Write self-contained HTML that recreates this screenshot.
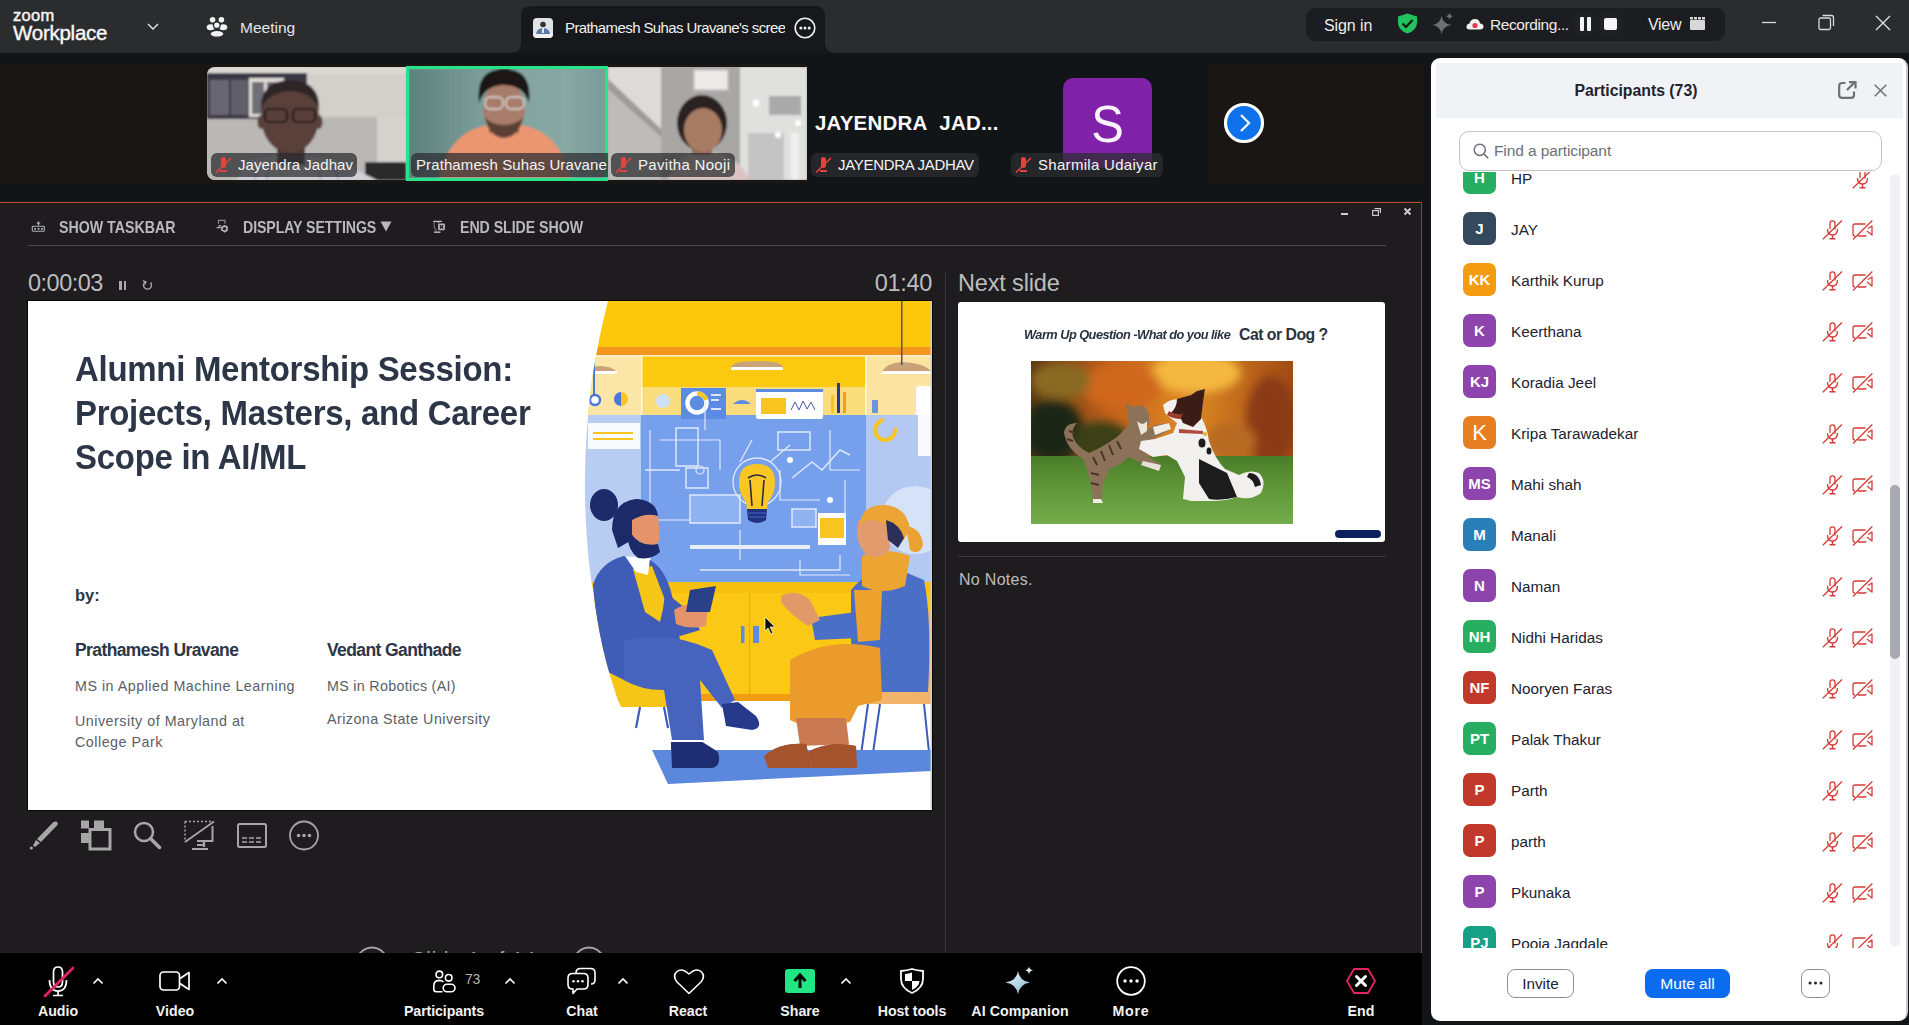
<!DOCTYPE html>
<html><head><meta charset="utf-8">
<style>
*{box-sizing:border-box;margin:0;padding:0}
html,body{width:1909px;height:1025px;overflow:hidden;background:#121518;font-family:"Liberation Sans",sans-serif;position:relative}
.a{position:absolute}
.t{position:absolute;white-space:nowrap;line-height:1}
svg{position:absolute;overflow:visible}
.lbl{position:absolute;top:153px;height:24px;border-radius:6px;background:rgba(45,45,48,0.74)}
.lt{position:absolute;top:157px;font-size:15px;color:#f4f4f4;white-space:nowrap;line-height:1;letter-spacing:0.3px}
.tb{position:absolute;top:1004px;font-size:14.2px;font-weight:700;color:#f2f2f2;white-space:nowrap;line-height:1;text-align:center;width:120px}
.pn{position:absolute;font-size:15.3px;color:#222230;white-space:nowrap;line-height:1}
.av{position:absolute;left:1463px;width:33px;height:33px;border-radius:7px;color:#fff;font-weight:700;font-size:15px;line-height:33px;text-align:center}
</style></head><body>
<!-- TOP BAR -->
<div class="a" style="left:0;top:0;width:1909px;height:53px;background:#2b2c2e"></div>
<div class="t" style="left:13px;top:7px;font-size:16.5px;font-weight:400;color:#f2f2f2;letter-spacing:0.3px;-webkit-text-stroke:0.5px #f2f2f2">zoom</div>
<div class="t" style="left:13px;top:23px;font-size:20.5px;font-weight:400;color:#f7f7f7;letter-spacing:-0.25px;-webkit-text-stroke:0.4px #f7f7f7">Workplace</div>
<svg style="left:147px;top:22px" width="12" height="9" viewBox="0 0 12 9"><path d="M1 2 L6 7 L11 2" fill="none" stroke="#e8e8e8" stroke-width="1.4"/></svg>
<svg style="left:206px;top:16px" width="22" height="22" viewBox="0 0 22 22"><circle cx="6.6" cy="3.7" r="2.8" fill="#f2f2f2"/><circle cx="15.4" cy="3.7" r="2.8" fill="#f2f2f2"/><ellipse cx="4.7" cy="11.2" rx="4" ry="3" fill="#f2f2f2"/><ellipse cx="17.3" cy="11.2" rx="4" ry="3" fill="#f2f2f2"/><circle cx="10.8" cy="9.2" r="3.3" fill="#f2f2f2" stroke="#2b2c2e" stroke-width="1.3"/><ellipse cx="11" cy="17.8" rx="7" ry="3.4" fill="#f2f2f2" stroke="#2b2c2e" stroke-width="1.2"/></svg>
<div class="t" style="left:240px;top:20px;font-size:15.5px;color:#e4e4e4">Meeting</div>
<!-- tab -->
<svg style="left:510px;top:6px" width="326" height="47" viewBox="0 0 326 47"><path d="M0 47 Q11 47 11 36 L11 10 Q11 0 21 0 L305 0 Q315 0 315 10 L315 36 Q315 47 326 47 Z" fill="#17181b"/></svg>
<svg style="left:533px;top:18px;overflow:hidden;border-radius:4px" width="20" height="20" viewBox="0 0 20 20"><rect width="20" height="20" fill="#dfe3e7"/><rect x="0" y="15" width="20" height="5" fill="#f0f0f0"/><path d="M3 16 Q4 10 10 10 Q16 10 17 16 Z" fill="#5a7aa6"/><circle cx="10" cy="6.5" r="2.8" fill="#3a3030"/><rect x="9" y="10" width="2" height="5" fill="#e8e8e8"/></svg>
<div class="t" style="left:565px;top:20px;font-size:15px;color:#f0f0f0;letter-spacing:-0.6px;width:220px;overflow:hidden">Prathamesh Suhas Uravane's screen share</div>
<svg style="left:794px;top:17px" width="22" height="22" viewBox="0 0 22 22"><circle cx="11" cy="11" r="9.8" fill="none" stroke="#f0f0f0" stroke-width="1.6"/><circle cx="6.8" cy="11" r="1.5" fill="#f0f0f0"/><circle cx="11" cy="11" r="1.5" fill="#f0f0f0"/><circle cx="15.2" cy="11" r="1.5" fill="#f0f0f0"/></svg>
<!-- right group -->
<div class="a" style="left:1306px;top:8px;width:419px;height:33px;background:#1c1d20;border-radius:9px"></div>
<div class="t" style="left:1324px;top:18px;font-size:16px;color:#ececec;letter-spacing:-0.1px">Sign in</div>
<svg style="left:1397px;top:13px" width="21" height="21" viewBox="0 0 21 21"><path d="M10.5 0.5 L20 3.5 L20 10 Q20 17 10.5 20.5 Q1 17 1 10 L1 3.5 Z" fill="#22c35e"/><path d="M5.5 10.5 L9 14 L15.5 7" fill="none" stroke="#0f1a12" stroke-width="2.2"/></svg>
<svg style="left:1432px;top:12px" width="22" height="23" viewBox="0 0 22 23"><path d="M9.5 3.5 Q10.5 12 19.5 13 Q10.5 14 9.5 22.5 Q8.5 14 0.5 13 Q8.5 12 9.5 3.5 Z" fill="#6f7075"/><path d="M17.5 1 Q18 3.6 20.8 4.2 Q18 4.8 17.5 7.6 Q17 4.8 14.2 4.2 Q17 3.6 17.5 1 Z" fill="#6f7075"/></svg>
<svg style="left:1466px;top:18px" width="18" height="12" viewBox="0 0 18 12"><path d="M3.5 11.5 Q0 11.5 0.5 8 Q1 5.5 3.5 5.5 Q4.5 1 9 1 Q13.5 1 14 5.5 Q17.5 5.8 17.5 8.5 Q17.5 11.5 14 11.5 Z" fill="#f1f1f1"/><circle cx="9" cy="7.5" r="2.6" fill="#e8384f"/></svg>
<div class="t" style="left:1490px;top:17px;font-size:15.5px;color:#ececec;letter-spacing:-0.4px">Recording...</div>
<div class="a" style="left:1573px;top:11px;width:26px;height:26px;border-radius:13px;background:#1f2023"></div>
<div class="a" style="left:1580px;top:17px;width:4px;height:14px;background:#f5f5f5;border-radius:1px"></div>
<div class="a" style="left:1587px;top:17px;width:4px;height:14px;background:#f5f5f5;border-radius:1px"></div>
<div class="a" style="left:1598px;top:11px;width:26px;height:26px;border-radius:13px;background:#1f2023"></div>
<div class="a" style="left:1604px;top:18px;width:13px;height:12px;background:#f5f5f5;border-radius:2px"></div>
<div class="t" style="left:1648px;top:17px;font-size:16px;color:#ececec;letter-spacing:-0.3px">View</div>
<svg style="left:1690px;top:17px" width="15" height="13" viewBox="0 0 15 13"><rect x="0" y="3" width="15" height="10" rx="1" fill="#d8d8d8"/><rect x="0" y="0" width="3" height="2.5" fill="#d8d8d8"/><rect x="4" y="0" width="3" height="2.5" fill="#d8d8d8"/><rect x="8" y="0" width="3" height="2.5" fill="#d8d8d8"/><rect x="12" y="0" width="3" height="2.5" fill="#d8d8d8"/></svg>
<svg style="left:1761px;top:15px" width="16" height="16" viewBox="0 0 16 16"><path d="M1 7.5 H15" stroke="#d9d9d9" stroke-width="1.3"/></svg>
<svg style="left:1818px;top:14px" width="17" height="17" viewBox="0 0 17 17"><rect x="1" y="4" width="11.5" height="11.5" rx="1.5" fill="none" stroke="#d9d9d9" stroke-width="1.3"/><path d="M4.5 1.5 H13.5 Q15.5 1.5 15.5 3.5 V12" fill="none" stroke="#d9d9d9" stroke-width="1.3"/></svg>
<svg style="left:1875px;top:15px" width="16" height="16" viewBox="0 0 16 16"><path d="M1 1 L15 15 M15 1 L1 15" stroke="#e0e0e0" stroke-width="1.4"/></svg>

<!-- STRIP -->
<div class="a" style="left:0;top:63px;width:1423px;height:120px;background:#1a1614"></div>
<div class="a" style="left:807px;top:63px;width:401px;height:120px;background:#121518"></div>

<!-- thumb 1: Jayendra -->
<div class="a" style="left:207px;top:67px;width:199px;height:113px;border-radius:8px 0 0 8px;overflow:hidden;background:#cbc8c4">
<svg style="left:0;top:0" width="199" height="113" viewBox="0 0 199 113"><defs><filter id="bl1" x="-5%" y="-5%" width="110%" height="110%"><feGaussianBlur stdDeviation="1.1"/></filter></defs>
<g filter="url(#bl1)">
<rect width="199" height="113" fill="#d3cfca"/>
<rect x="0" y="0" width="199" height="7" fill="#dcd9d4"/>
<rect x="0" y="50" width="170" height="63" fill="#bab8b5"/>
<rect x="170" y="50" width="29" height="63" fill="#d6d2cd"/>
<rect x="0" y="6" width="100" height="46" fill="#3a3744"/>
<rect x="3" y="13" width="19" height="35" fill="#67666f"/>
<rect x="24" y="13" width="17" height="35" fill="#5f5e69"/>
<rect x="42" y="11" width="35" height="39" fill="#dedbd6"/>
<rect x="45" y="15" width="12" height="32" fill="#6f6e77"/>
<rect x="60" y="15" width="14" height="32" fill="#66656f"/>
<rect x="158" y="95" width="41" height="18" fill="#2b2929"/>
<path d="M30 113 L40 94 Q82 82 130 94 L170 113 Z" fill="#cfd1d8"/><path d="M50 100 L48 113 M62 96 L60 113 M110 96 L114 113 M126 98 L132 113" stroke="#9aa0b8" stroke-width="1.5"/>
<rect x="70" y="78" width="28" height="20" fill="#4e3733"/>
<ellipse cx="83" cy="50" rx="29" ry="36" fill="#5a3f3a"/>
<path d="M54 44 Q52 14 83 13 Q114 14 112 44 Q108 26 83 24 Q58 26 54 44 Z" fill="#2e2727"/>
<ellipse cx="54" cy="55" rx="3.5" ry="7" fill="#5a3f3a"/>
<ellipse cx="112" cy="55" rx="3.5" ry="7" fill="#5a3f3a"/>
<rect x="58" y="42" width="22" height="13" rx="4" fill="none" stroke="#221a1a" stroke-width="2.2"/>
<rect x="86" y="42" width="22" height="13" rx="4" fill="none" stroke="#221a1a" stroke-width="2.2"/>
</g></svg>
</div>
<div class="lbl" style="left:211px;width:146px"></div>
<div class="lt" style="left:238px;letter-spacing:0.05px">Jayendra Jadhav</div>

<!-- thumb 2: Prathamesh -->
<div class="a" style="left:406px;top:66px;width:202px;height:115px;background:#27e38a"></div>
<div class="a" style="left:409px;top:69px;width:196px;height:109px;overflow:hidden;background:#7a9c98">
<svg style="left:0;top:0" width="196" height="109" viewBox="0 0 196 109"><defs><filter id="bl2" x="-5%" y="-5%" width="110%" height="110%"><feGaussianBlur stdDeviation="1.2"/></filter>
<linearGradient id="tg" x1="0" y1="0" x2="1" y2="0"><stop offset="0" stop-color="#5e817d"/><stop offset="0.45" stop-color="#82a39f"/><stop offset="0.8" stop-color="#88a8a4"/><stop offset="1" stop-color="#7a9b97"/></linearGradient></defs>
<g filter="url(#bl2)">
<rect width="196" height="109" fill="url(#tg)"/>
<path d="M30 109 Q40 62 80 56 L112 56 Q150 62 162 109 Z" fill="#eb9670"/>
<rect x="80" y="48" width="30" height="16" fill="#946a5a"/>
<ellipse cx="95" cy="40" rx="21" ry="28" fill="#a87c6a"/>
<path d="M76 48 Q80 68 95 69 Q110 68 114 48 Q108 56 95 56 Q82 56 76 48 Z" fill="#5a4036"/>
<path d="M70 34 Q66 0 95 0 Q124 0 120 34 Q114 16 95 16 Q76 16 70 34 Z" fill="#1b1616"/>
<rect x="76" y="28" width="18" height="12" rx="5" fill="none" stroke="#dcdcdc" stroke-width="1.4"/>
<rect x="97" y="28" width="18" height="12" rx="5" fill="none" stroke="#dcdcdc" stroke-width="1.4"/>
</g></svg>
</div>
<div class="lbl" style="left:411px;width:197px;border-radius:6px 0 0 6px"></div>
<div class="lt" style="left:416px;letter-spacing:0.1px">Prathamesh Suhas Uravane</div>

<!-- thumb 3: Pavitha -->
<div class="a" style="left:608px;top:67px;width:199px;height:113px;overflow:hidden;background:#a9a8a7">
<svg style="left:0;top:0" width="199" height="113" viewBox="0 0 199 113"><defs><filter id="bl3" x="-5%" y="-5%" width="110%" height="110%"><feGaussianBlur stdDeviation="1.1"/></filter></defs>
<g filter="url(#bl3)">
<rect width="199" height="113" fill="#a8a7a5"/>
<path d="M0 0 H53 V113 H0 Z" fill="#bdbcb9"/>
<path d="M0 0 H53 V62 L0 12 Z" fill="#dddbd7"/>
<path d="M0 12 L53 62 V70 L0 22 Z" fill="#9d9c9a"/>
<rect x="132" y="0" width="67" height="113" fill="#e0e0df"/>
<rect x="140" y="66" width="36" height="47" fill="#c4c4c4"/>
<rect x="183" y="66" width="8" height="47" fill="#f0f0f0"/>
<rect x="161" y="29" width="32" height="19" fill="#aaaaaa"/>
<circle cx="148" cy="36" r="3.5" fill="#fff"/><circle cx="190" cy="56" r="3" fill="#fff"/><circle cx="170" cy="68" r="3" fill="#fff"/>
<rect x="86" y="3" width="34" height="20" fill="#ecebea" stroke="#c4c4c4" stroke-width="1.5"/>
<path d="M60 113 Q66 88 94 84 Q130 86 142 113 Z" fill="#dcc4c2"/>
<rect x="84" y="72" width="20" height="16" fill="#956a56"/>
<ellipse cx="94" cy="56" rx="25" ry="28" fill="#2c2323"/>
<ellipse cx="95" cy="63" rx="19" ry="22" fill="#a87b64"/>
</g></svg>
</div>
<div class="lbl" style="left:611px;width:124px"></div>
<div class="lt" style="left:638px">Pavitha Nooji</div>

<!-- thumb 4: JAYENDRA -->
<div class="t" style="left:815px;top:113px;font-size:20.5px;font-weight:700;color:#fafafa;letter-spacing:0.2px">JAYENDRA&nbsp; JAD...</div>
<div class="lbl" style="left:811px;width:168px"></div>
<div class="lt" style="left:838px;font-size:15px;letter-spacing:-0.3px">JAYENDRA JADHAV</div>

<!-- thumb 5: Sharmila -->
<div class="a" style="left:1063px;top:78px;width:89px;height:90px;border-radius:10px;background:#7f21a9"></div>
<div class="t" style="left:1063px;top:98px;width:89px;text-align:center;font-size:52px;color:#fbf3fb;transform:scaleX(0.94)">S</div>
<div class="lbl" style="left:1011px;width:152px"></div>
<div class="lt" style="left:1038px">Sharmila Udaiyar</div>

<!-- mute icons on labels -->
<svg style="left:215px;top:157px" width="17" height="16" viewBox="0 0 17 16"><path d="M6 2 Q6 0 8.5 0 Q11 0 11 2 L11 9 Q11 11 8.5 11 Q6 11 6 9 Z M5 13 H12 V15 H5Z" fill="#e8413d"/><path d="M1 15.5 L16 1" stroke="#e8413d" stroke-width="1.6"/></svg>
<svg style="left:615px;top:157px" width="17" height="16" viewBox="0 0 17 16"><path d="M6 2 Q6 0 8.5 0 Q11 0 11 2 L11 9 Q11 11 8.5 11 Q6 11 6 9 Z M5 13 H12 V15 H5Z" fill="#e8413d"/><path d="M1 15.5 L16 1" stroke="#e8413d" stroke-width="1.6"/></svg>
<svg style="left:815px;top:157px" width="17" height="16" viewBox="0 0 17 16"><path d="M6 2 Q6 0 8.5 0 Q11 0 11 2 L11 9 Q11 11 8.5 11 Q6 11 6 9 Z M5 13 H12 V15 H5Z" fill="#e8413d"/><path d="M1 15.5 L16 1" stroke="#e8413d" stroke-width="1.6"/></svg>
<svg style="left:1015px;top:157px" width="17" height="16" viewBox="0 0 17 16"><path d="M6 2 Q6 0 8.5 0 Q11 0 11 2 L11 9 Q11 11 8.5 11 Q6 11 6 9 Z M5 13 H12 V15 H5Z" fill="#e8413d"/><path d="M1 15.5 L16 1" stroke="#e8413d" stroke-width="1.6"/></svg>

<!-- next arrow -->
<svg style="left:1224px;top:103px" width="40" height="40" viewBox="0 0 40 40"><circle cx="20" cy="20" r="18.5" fill="#0e72ed" stroke="#fff" stroke-width="3.2"/><path d="M17 12 L25 20 L17 28" fill="none" stroke="#fff" stroke-width="2.2"/></svg>
<!-- PRESENTER WINDOW -->
<div class="a" style="left:0;top:201px;width:1422px;height:752px;background:#1e1c1f"></div>
<div class="a" style="left:0;top:202px;width:1422px;height:1px;background:#b54c34"></div>
<div class="a" style="left:1421px;top:202px;width:1px;height:751px;background:#8c3f2e"></div>
<!-- title bar controls -->
<div class="a" style="left:1341px;top:213px;width:7px;height:2px;background:#d0d0d0"></div>
<svg style="left:1372px;top:208px" width="9" height="8" viewBox="0 0 9 8"><rect x="0.6" y="2.6" width="5.8" height="4.8" fill="none" stroke="#c8c8c8" stroke-width="1.2"/><path d="M2.5 0.6 H8.4 V5" fill="none" stroke="#c8c8c8" stroke-width="1.2"/></svg>
<svg style="left:1404px;top:208px" width="7" height="7" viewBox="0 0 7 7"><path d="M0.5 0.5 L6.5 6.5 M6.5 0.5 L0.5 6.5" stroke="#d0d0d0" stroke-width="1.8"/></svg>

<!-- toolbar -->
<svg style="left:31px;top:221px" width="15" height="11" viewBox="0 0 15 11"><path d="M7.5 0.5 V4.5 M5.8 2.2 H9.2" stroke="#b0b0b0" stroke-width="1.2"/><rect x="1.3" y="5.2" width="12" height="5" rx="0.8" fill="none" stroke="#b0b0b0" stroke-width="1.1"/><rect x="3" y="7" width="2" height="1.6" fill="#b0b0b0"/><rect x="6.5" y="7" width="2" height="1.6" fill="#b0b0b0"/><rect x="10" y="7" width="2" height="1.6" fill="#b0b0b0"/></svg>
<div class="t" style="left:59px;top:221px;font-size:14.2px;font-weight:700;color:#b9b9b9;transform:scaleY(1.1);transform-origin:0 100%;transform:scaleY(1.1);transform-origin:0 100%;transform:scaleY(1.1);transform-origin:0 100%">SHOW TASKBAR</div>
<svg style="left:216px;top:219px" width="14" height="15" viewBox="0 0 14 15"><path d="M2.5 4.8 V1.3 H9 V4.8" fill="none" stroke="#8a8a8a" stroke-width="1.2"/><path d="M2.3 6.8 H5 M0.6 8.7 H4.8" stroke="#b8b8b8" stroke-width="1.2"/><circle cx="8.5" cy="9.7" r="2.5" fill="none" stroke="#b0b0b0" stroke-width="1.7"/><path d="M8.5 6 V7.2 M8.5 12.2 V13.4 M5.3 7.9 L6.3 8.5 M10.7 10.9 L11.7 11.5 M5.3 11.5 L6.3 10.9 M10.7 8.5 L11.7 7.9" stroke="#b0b0b0" stroke-width="1.3"/></svg>
<div class="t" style="left:243px;top:221px;font-size:14.2px;font-weight:700;color:#b9b9b9;transform:scaleY(1.1);transform-origin:0 100%;transform:scaleY(1.1);transform-origin:0 100%;transform:scaleY(1.1);transform-origin:0 100%;letter-spacing:-0.1px">DISPLAY SETTINGS</div>
<svg style="left:380px;top:221px" width="12" height="11" viewBox="0 0 12 11"><path d="M0.5 0.5 H11.5 L6 10.5 Z" fill="#b9b9b9"/></svg>
<svg style="left:433px;top:220px" width="13" height="14" viewBox="0 0 13 14"><path d="M0.3 1.3 H9 M5.5 1.3 V3" stroke="#c0c0c0" stroke-width="1.2"/><path d="M1.2 2 V7.5 L3 9.5 V11" stroke="#6a6a6a" stroke-width="1.3" fill="none"/><path d="M1 12.2 H7.5" stroke="#b0b0b0" stroke-width="1.6"/><rect x="5" y="3.5" width="7" height="6.7" rx="1.2" fill="#b4b4b4"/><path d="M6.8 5.2 L10.2 8.6 M10.2 5.2 L6.8 8.6" stroke="#111" stroke-width="1.2"/></svg>
<div class="t" style="left:460px;top:221px;font-size:14.2px;font-weight:700;color:#b9b9b9;transform:scaleY(1.1);transform-origin:0 100%;transform:scaleY(1.1);transform-origin:0 100%;transform:scaleY(1.1);transform-origin:0 100%;letter-spacing:-0.05px">END SLIDE SHOW</div>
<div class="a" style="left:28px;top:245px;width:1358px;height:1px;background:#4d4a4d"></div>

<!-- timer -->
<div class="t" style="left:28px;top:272px;font-size:23.5px;color:#bdbdbd;letter-spacing:-0.5px">0:00:03</div>
<div class="a" style="left:119px;top:281px;width:2.5px;height:9px;background:#a8a8a8"></div>
<div class="a" style="left:123.5px;top:281px;width:2.5px;height:9px;background:#a8a8a8"></div>
<svg style="left:142px;top:280px" width="11" height="11" viewBox="0 0 11 11"><path d="M3 2 A4 4 0 1 0 8.5 2.5" fill="none" stroke="#a8a8a8" stroke-width="1.4"/><path d="M0.8 0.5 L4 1.8 L2.6 4.6" fill="none" stroke="#a8a8a8" stroke-width="1.3"/></svg>
<div class="t" style="left:832px;width:100px;text-align:right;top:272px;font-size:23.5px;color:#bdbdbd;letter-spacing:-0.3px">01:40</div>
<div class="a" style="left:945px;top:273px;width:1px;height:680px;background:#38363a"></div>
<div class="t" style="left:958px;top:272px;font-size:23.5px;color:#bdbdbd;letter-spacing:-0.15px">Next slide</div>

<!-- MAIN SLIDE -->
<div class="a" style="left:28px;top:301px;width:904px;height:509px;background:#fff;overflow:hidden;box-shadow:0 0 0 1px #060606">
  <div class="t" style="left:47px;top:46px;font-size:34.5px;font-weight:700;color:#2d3647;letter-spacing:-0.3px;line-height:44px;transform:scaleX(0.956);transform-origin:0 0">Alumni Mentorship Session:<br>Projects, Masters, and Career<br>Scope in AI/ML</div>
  <div class="t" style="left:47px;top:286px;font-size:16.5px;font-weight:700;color:#2d3647">by:</div>
  <div class="t" style="left:47px;top:341px;font-size:17.5px;font-weight:700;color:#2d3647;letter-spacing:-0.6px">Prathamesh Uravane</div>
  <div class="t" style="left:299px;top:341px;font-size:17.5px;font-weight:700;color:#2d3647;letter-spacing:-0.6px">Vedant Ganthade</div>
  <div class="t" style="left:47px;top:378px;font-size:14.3px;color:#5a5e66;letter-spacing:0.5px">MS in Applied Machine Learning</div>
  <div class="t" style="left:299px;top:378px;font-size:14.3px;color:#5a5e66;letter-spacing:0.3px">MS in Robotics (AI)</div>
  <div class="t" style="left:47px;top:410px;font-size:14.3px;color:#5a5e66;line-height:21px;letter-spacing:0.5px">University of Maryland at<br>College Park</div>
  <div class="t" style="left:299px;top:411px;font-size:14.3px;color:#5a5e66;letter-spacing:0.45px">Arizona State University</div>
  <svg style="left:-28px;top:-301px" width="1909" height="1025" viewBox="0 0 1909 1025">
<defs>
<clipPath id="ilc"><path d="M608 301 Q598 340 592 380 Q584 440 585 500 Q587 560 593 590 Q600 650 618 700 Q630 730 650 750 L668 786 L932 772 L932 301 Z"/></clipPath>
<linearGradient id="ceil" x1="0" y1="0" x2="0" y2="1"><stop offset="0" stop-color="#fbd030"/><stop offset="1" stop-color="#fbe07a"/></linearGradient>
</defs>
<g clip-path="url(#ilc)">
<rect x="580" y="301" width="352" height="490" fill="#fff"/>
<rect x="580" y="301" width="352" height="46" fill="#fcc80c"/>
<rect x="580" y="347" width="352" height="9" fill="#f4961c"/>
<rect x="580" y="356" width="352" height="59" fill="#fbca10"/>
<rect x="580" y="387" width="352" height="28" fill="#f9dc7c"/>
<rect x="580" y="356" width="61" height="59" fill="#fbe6a8"/>
<rect x="866" y="356" width="66" height="59" fill="#fbe4a0"/>
<rect x="580" y="355" width="352" height="1.5" fill="#fff" opacity="0.8"/>
<rect x="641" y="356" width="1.5" height="226" fill="#fff" opacity="0.8"/>
<rect x="865" y="356" width="1.5" height="226" fill="#fff" opacity="0.8"/>
<path d="M731 368 Q731 361 756 361 Q783 361 783 368 Z" fill="#c9a27a"/><rect x="731" y="367" width="52" height="3" rx="1.5" fill="#fff"/>
<path d="M882 372 Q886 363 902 362 Q925 363 932 372 Z" fill="#c9a27a"/><rect x="882" y="371" width="50" height="3" rx="1.5" fill="#fff"/>
<path d="M585 372 Q590 366 600 366 Q612 366 617 372 Z" fill="#c9a27a"/><rect x="585" y="371" width="32" height="3" fill="#fff"/>
<rect x="901" y="301" width="1.5" height="64" fill="#555"/>
<path d="M594 360 V396" stroke="#4a78d8" stroke-width="2"/><circle cx="595" cy="400" r="5" fill="#fff" stroke="#4a78d8" stroke-width="2.5"/>
<path d="M621 392 A7 7 0 0 0 621 406 Z" fill="#4a78d8"/><path d="M621 392 A7 7 0 0 1 621 406 Z" fill="#f8c520"/>
<circle cx="663" cy="401" r="7" fill="#cfe0fa"/>
<path d="M733 404 Q742 396 751 404 Z" fill="#5b8be3"/>
<rect x="872" y="400" width="6" height="13" fill="#6d94de"/>
<rect x="916" y="387" width="16" height="45" fill="#fff"/>
<!-- blue panel -->
<rect x="580" y="415" width="61" height="168" fill="#b9cdf3"/>
<rect x="641" y="415" width="225" height="168" fill="#77a0ec"/>
<rect x="866" y="415" width="66" height="168" fill="#b3c9f2"/><circle cx="915" cy="520" r="34" fill="#d6e2f8"/>
<rect x="681" y="388" width="45" height="31" fill="#5b8be3"/>
<circle cx="697" cy="403" r="9.5" fill="none" stroke="#fff" stroke-width="4.5"/><path d="M697 393.5 A9.5 9.5 0 0 1 706 400" fill="none" stroke="#f8c520" stroke-width="4.5"/><rect x="711" y="394" width="10" height="2" fill="#dfe8fb"/><rect x="711" y="399" width="8" height="2" fill="#dfe8fb"/><rect x="711" y="408" width="10" height="2" fill="#dfe8fb"/>
<rect x="756" y="389" width="67" height="30" rx="2" fill="#fff"/><rect x="756" y="389" width="67" height="3" fill="#5b8be3"/>
<rect x="761" y="398" width="25" height="16" fill="#f8c520"/><path d="M791 410 L795 402 L799 410 L803 401 L807 409 L811 402 L815 410" fill="none" stroke="#4a5a9a" stroke-width="1"/>
<rect x="837" y="383" width="3" height="30" fill="#233b8a"/><rect x="843" y="392" width="3" height="21" fill="#f49a1c"/><rect x="831" y="395" width="3" height="18" fill="#f8c520"/>
<rect x="588" y="423" width="52" height="26" fill="#fff" opacity="0.9"/>
<rect x="593" y="432" width="40" height="2" fill="#f8c520"/><rect x="593" y="438" width="40" height="2" fill="#f8c520"/>
<rect x="918" y="386" width="14" height="70" fill="#fff" opacity="0.9"/>
<path d="M884 420 A10 10 0 1 0 895 428" fill="none" stroke="#f8c520" stroke-width="4"/>
<rect x="676" y="428" width="22" height="38" fill="none" stroke="#dfe8fb" stroke-width="1.5"/>
<rect x="686" y="468" width="22" height="20" fill="none" stroke="#dfe8fb" stroke-width="1.5"/>
<rect x="778" y="432" width="32" height="18" fill="none" stroke="#dfe8fb" stroke-width="1.5"/>
<path d="M792 478 L812 462 L822 470 L840 450 L850 455" fill="none" stroke="#dfe8fb" stroke-width="1.5"/>
<rect x="690" y="495" width="50" height="28" fill="#8fb3f0" stroke="#dfe8fb" stroke-width="1.5"/>
<rect x="792" y="509" width="24" height="18" fill="#8fb3f0" stroke="#dfe8fb" stroke-width="1.5"/>
<rect x="818" y="513" width="28" height="32" fill="#fff"/><rect x="820" y="518" width="24" height="20" fill="#f8c520"/>
<rect x="690" y="545" width="120" height="4" fill="#e8eefc"/>
<path d="M645 470 H680 M740 462 L752 440 M770 462 L790 445 M700 570 H840 V555" fill="none" stroke="#dfe8fb" stroke-width="1.3"/>
<path d="M650 430 V560 M660 440 H720 M720 440 V470 M830 430 V470 H860 M650 520 H690 M740 530 V560 M780 470 V500 H820 M705 430 V400 M845 480 V520 M800 560 V575 H850" fill="none" stroke="#dfe8fb" stroke-width="1.2"/>
<circle cx="700" cy="470" r="4" fill="none" stroke="#dfe8fb" stroke-width="1.2"/><circle cx="790" cy="460" r="3" fill="#fff"/><circle cx="830" cy="500" r="3" fill="#fff"/>
<circle cx="757" cy="482" r="24" fill="none" stroke="#dfe8fb" stroke-width="1.3"/>
<path d="M739 482 Q739 464 757 464 Q775 464 775 482 Q775 494 768 502 L767 510 L747 510 L746 502 Q739 494 739 482 Z" fill="#f9c623"/>
<path d="M750 480 L752 506 M764 480 L762 506 M748 478 Q757 472 766 478" fill="none" stroke="#2a2a40" stroke-width="1.6"/>
<path d="M747 509 L767 509 L766 520 Q757 526 748 520 Z" fill="#1f3380"/>
<path d="M748 513 H766 M749 517 H765" stroke="#4a68c8" stroke-width="1"/>
<!-- cabinet -->
<rect x="580" y="582" width="352" height="11" fill="#f7c010"/>
<rect x="580" y="593" width="352" height="103" fill="#fac815"/>
<rect x="580" y="694" width="352" height="7" fill="#f29c12"/>
<rect x="749" y="593" width="1.2" height="101" fill="#e3b010"/>
<rect x="741" y="626" width="3.5" height="17" fill="#5b8be3"/><rect x="753" y="626" width="6" height="17" fill="#5b8be3"/>
<!-- man -->
<path d="M612 651 L668 660 L672 707 L618 707 Z" fill="#f5c518"/>
<path d="M640 707 L636 728 M664 707 L668 728" stroke="#3b5cb8" stroke-width="2.2"/>
<path d="M593 585 Q600 562 624 556 L650 560 Q668 570 674 605 L680 640 L660 670 L630 683 L608 672 Q596 630 593 585 Z" fill="#3f5cb6"/>
<path d="M633 569 L652 566 L665 600 L660 622 L645 612 Z" fill="#f5c518"/>
<path d="M625 556 L650 558 L648 575 L636 572 Z" fill="#fff"/>
<path d="M665 592 L690 612 L700 630 L680 636 L662 620 Z" fill="#3f5cb6"/>
<path d="M674 610 Q690 600 708 606 L706 626 Q690 630 676 624 Z" fill="#e4936a"/>
<path d="M690 590 L716 586 L710 612 L686 612 Z" fill="#2a4088"/>
<path d="M624 640 Q670 630 712 650 L735 700 L722 708 L700 680 L704 740 L672 740 L664 690 Q640 690 624 680 Z" fill="#4663bd"/>
<path d="M671 742 L702 742 L718 752 Q722 766 712 768 L672 768 Z" fill="#1f2d72"/>
<path d="M722 704 L738 702 L756 716 Q764 728 752 730 L726 726 Z" fill="#27398a"/>
<path d="M604 505 m-14 0 a14 16 0 1 0 28 0 a14 16 0 1 0 -28 0" fill="#1c2a6a"/>
<path d="M612 530 Q612 502 636 499 Q656 500 658 516 L648 518 Q634 520 632 540 L618 548 Z" fill="#1c2a6a"/>
<path d="M632 520 Q646 512 658 516 L660 540 Q654 550 640 550 L632 540 Z" fill="#e4936a"/>
<path d="M630 532 Q640 548 658 544 L660 552 Q652 560 638 558 Q628 550 628 538 Z" fill="#1c2a6a"/>
<!-- woman -->
<path d="M849 654 L928 660 L932 704 L852 704 Z" fill="#f2b46a"/>
<path d="M916 613 L932 610 L932 700 L918 700 Z" fill="#f2b46a"/>
<path d="M868 704 L860 762 M880 704 L872 760 M924 704 L930 762" stroke="#3b5cb8" stroke-width="2"/>
<path d="M851 590 Q870 566 900 570 L924 580 Q932 620 928 692 L880 692 Q852 680 851 640 Z" fill="#4a6fc6"/>
<path d="M811 618 L856 612 L860 638 L815 640 Z" fill="#4a6fc6"/>
<path d="M781 596 Q796 588 810 600 L820 620 L808 626 Q790 614 781 602 Z" fill="#e09a6a"/>
<path d="M854 590 L882 590 L880 640 L858 642 Z" fill="#eda22e"/>
<path d="M862 556 Q885 546 910 556 L905 586 Q882 596 862 586 Z" fill="#eca530"/>
<path d="M790 660 Q830 636 880 648 L882 700 L858 706 L850 722 L812 730 L790 720 Z" fill="#eb9a2c"/>
<path d="M796 718 L846 718 L849 744 L800 746 Z" fill="#c97a52"/>
<path d="M764 756 Q780 742 806 744 L812 768 L768 768 Z" fill="#a4532c"/>
<path d="M808 752 Q830 740 856 746 L857 768 L812 768 Z" fill="#a4532c"/>
<path d="M906 526 Q922 528 923 546 Q918 556 910 550 Z" fill="#eaa234"/>
<path d="M858 522 Q870 510 888 514 L890 548 Q884 560 868 556 Q860 550 857 536 Z" fill="#e19b6c"/>
<path d="M860 524 Q862 504 886 505 Q908 508 910 530 L902 542 Q894 524 874 520 Q864 520 860 524 Z" fill="#eca534"/>
<path d="M886 520 Q900 524 904 538 L898 548 L888 540 Z" fill="#2b2f5a"/>
<!-- floor -->
<path d="M652 750 L932 750 L932 771 L668 784 Z" fill="#5b87dc"/>
<path d="M671 742 L702 742 L718 752 Q722 766 712 768 L672 768 Z" fill="#1f2d72"/>
<path d="M764 756 Q780 742 806 744 L812 768 L768 768 Z" fill="#a4532c"/>
<path d="M808 752 Q830 740 856 746 L857 768 L812 768 Z" fill="#a4532c"/>
</g>
<rect x="930.5" y="301" width="1.5" height="508" fill="#d0d0d0"/>
<path d="M765 617 L765 631 L768 628 L771 634 L773 633 L770 627 L775 627 Z" fill="#111" stroke="#fff" stroke-width="0.7"/>
</svg>

</div>

<!-- NEXT SLIDE -->
<div class="a" style="left:958px;top:302px;width:427px;height:240px;background:#fff;border-radius:3px;overflow:hidden">
  <div class="t" style="left:66px;top:26px;font-size:13.2px;font-weight:700;font-style:italic;color:#2a3340;letter-spacing:-0.55px;transform:scaleX(0.97);transform-origin:0 0">Warm Up Question -What do you like</div>
  <div class="t" style="left:281px;top:25px;font-size:15.8px;font-weight:700;color:#2a3340;letter-spacing:-0.5px">Cat or Dog ?</div>
  <svg style="left:73px;top:59px;overflow:hidden" width="262" height="163" viewBox="0 0 262 163">
<defs>
<linearGradient id="cdbg" x1="0" y1="0" x2="1" y2="0"><stop offset="0" stop-color="#5a3a14"/><stop offset="0.3" stop-color="#c0601a"/><stop offset="0.6" stop-color="#e08a24"/><stop offset="1" stop-color="#a04a14"/></linearGradient>
<linearGradient id="grass" x1="0" y1="0" x2="0" y2="1"><stop offset="0" stop-color="#4a7c2a"/><stop offset="0.4" stop-color="#5d9436"/><stop offset="1" stop-color="#74ac4c"/></linearGradient>
<filter id="cdb" x="-5%" y="-5%" width="110%" height="110%"><feGaussianBlur stdDeviation="0.6"/></filter>
<filter id="cdb2" x="-20%" y="-20%" width="140%" height="140%"><feGaussianBlur stdDeviation="5"/></filter>
</defs>
<rect width="262" height="163" fill="url(#cdbg)"/>
<g filter="url(#cdb2)">
<ellipse cx="165" cy="12" rx="45" ry="20" fill="#f4b840"/>
<ellipse cx="90" cy="25" rx="40" ry="22" fill="#d0681c"/>
<ellipse cx="30" cy="20" rx="30" ry="18" fill="#8a6a20"/>
<ellipse cx="22" cy="70" rx="30" ry="32" fill="#1c2612"/>
<ellipse cx="70" cy="80" rx="30" ry="20" fill="#3a4018"/>
<ellipse cx="240" cy="60" rx="25" ry="45" fill="#8a3a12"/>
<ellipse cx="200" cy="80" rx="25" ry="18" fill="#b86a20"/>
</g>
<rect y="95" width="262" height="68" fill="url(#grass)"/>
<g filter="url(#cdb)">
<!-- cat -->
<path d="M52 98 Q36 88 33 72 Q34 62 46 62 Q40 68 42 76 Q46 86 58 92 Q72 86 86 76 L98 64 L96 48 L94 42 L102 46 L112 44 L118 52 L118 62 L114 70 L124 64 L138 62 L140 68 L122 78 L114 86 L118 96 L130 104 L128 110 L110 102 L98 96 L88 104 L78 108 L72 124 L70 140 L62 141 L60 124 L56 108 Z" fill="#8c7258"/>
<path d="M62 96 L66 104 M70 90 L74 100 M78 84 L82 94 M86 80 L90 88 M60 112 L68 114 M60 122 L68 124 M38 70 L44 72 M36 78 L42 80" stroke="#4a3626" stroke-width="2"/>
<path d="M106 60 Q112 66 116 60 L116 70 L110 74 Z" fill="#ece6de"/>
<path d="M122 66 L138 62 L140 68 L124 74 Z" fill="#f0ece6"/>
<path d="M112 100 L130 104 L128 110 L110 104 Z" fill="#e6e0d8"/>
<path d="M62 138 L70 138 L72 142 L62 142 Z" fill="#f0ece6"/>
<!-- dog -->
<path d="M132 44 Q138 38 148 38 L160 34 L166 30 L174 28 L172 42 L170 56 Q176 66 178 80 Q184 98 194 108 L208 114 Q218 108 228 112 Q236 120 230 132 Q220 140 206 136 Q196 140 180 140 L160 140 L152 138 L154 116 L146 100 L136 94 L122 96 L108 88 L110 80 L124 78 L142 72 L146 62 Q138 56 134 52 Z" fill="#f1f0ee"/>
<path d="M146 38 L160 34 L166 30 L174 28 L172 42 L170 58 L162 66 L152 62 L148 54 L140 52 Q146 46 146 38 Z" fill="#3a1e16"/>
<path d="M138 50 Q146 56 152 52 L150 58 Q142 58 136 54 Z" fill="#9a3a2a"/>
<path d="M148 68 L172 70 L172 73 L148 72 Z" fill="#b04a40"/>
<circle cx="174" cy="73" r="2" fill="#e0b030"/>
<path d="M168 98 Q180 104 196 112 L206 136 Q190 140 178 138 L168 122 Z" fill="#1e1a1a"/>
<path d="M218 112 Q228 112 230 124 L224 126 Q222 118 216 116 Z" fill="#1e1a1a"/>
<ellipse cx="171" cy="82" rx="3.5" ry="4.5" fill="#1e1a1a"/>
<ellipse cx="178" cy="90" rx="2.5" ry="3.5" fill="#1e1a1a"/>
</g>
</svg>

  <div class="a" style="left:377px;top:228px;width:46px;height:8px;border-radius:4px;background:#0c1f5e"></div>
</div>
<div class="a" style="left:958px;top:556px;width:428px;height:1px;background:#3a383b"></div>
<div class="t" style="left:959px;top:572px;font-size:16px;color:#bdbdbd;letter-spacing:0.3px">No Notes.</div>

<!-- bottom tool icons -->
<svg style="left:29px;top:820px" width="31" height="30" viewBox="0 0 31 30"><path d="M27 1.5 Q29.5 2.5 28.5 5 L12 22 L8 19 L24.5 2 Z" fill="#a6a6a6"/><path d="M7 20 L11 23 L6 27 L4 25.5 Z" fill="#a6a6a6"/><circle cx="2.3" cy="28" r="1.6" fill="#a6a6a6"/></svg>
<svg style="left:81px;top:820px" width="30" height="30" viewBox="0 0 30 30"><rect x="0" y="0.5" width="8" height="8" fill="#a6a6a6"/><rect x="13" y="0.5" width="10" height="8" fill="#a6a6a6"/><rect x="0" y="13" width="8" height="10" fill="#a6a6a6"/><rect x="9" y="9.5" width="20" height="19.5" fill="#1e1c1f" stroke="#a6a6a6" stroke-width="3"/></svg>
<svg style="left:133px;top:821px" width="29" height="29" viewBox="0 0 29 29"><circle cx="11" cy="11" r="9" fill="none" stroke="#a6a6a6" stroke-width="2.5"/><path d="M17.5 17.5 L26.5 26.5" stroke="#a6a6a6" stroke-width="3.5" stroke-linecap="round"/></svg>
<svg style="left:184px;top:820px" width="31" height="31" viewBox="0 0 31 31"><path d="M1 1.5 H29 M1 1.5 V22" fill="none" stroke="#a6a6a6" stroke-width="1.5" stroke-dasharray="2 2"/><path d="M1 22 L30 1.5" stroke="#a6a6a6" stroke-width="1.8"/><path d="M28.5 6 V21 H13" fill="none" stroke="#a6a6a6" stroke-width="2"/><path d="M15 21 H20 V27 M8 29 H24 M13 25 H19" fill="none" stroke="#a6a6a6" stroke-width="2.2"/></svg>
<svg style="left:237px;top:823px" width="30" height="25" viewBox="0 0 30 25"><rect x="1" y="1" width="28" height="23" rx="1.5" fill="none" stroke="#a6a6a6" stroke-width="2"/><path d="M5 15 H25 M5 19 H25" stroke="#a6a6a6" stroke-width="1.6" stroke-dasharray="5 2"/></svg>
<svg style="left:289px;top:820px" width="31" height="31" viewBox="0 0 31 31"><circle cx="15" cy="15.5" r="14" fill="none" stroke="#a6a6a6" stroke-width="1.8"/><circle cx="9.5" cy="15.5" r="1.8" fill="#a6a6a6"/><circle cx="15" cy="15.5" r="1.8" fill="#a6a6a6"/><circle cx="20.5" cy="15.5" r="1.8" fill="#a6a6a6"/></svg>

<!-- partial slide counter -->
<svg style="left:355px;top:945px" width="260" height="12" viewBox="0 0 260 12"><path d="M3 12 A15 15 0 0 1 31 12" fill="none" stroke="#a6a6a6" stroke-width="2"/><path d="M220 12 A15 15 0 0 1 248 12" fill="none" stroke="#a6a6a6" stroke-width="2"/></svg>
<div class="a" style="left:0;top:953px;width:1422px;height:72px;background:#000"></div>
<div class="a" style="left:412px;top:944px;width:140px;height:9px;overflow:hidden"><div class="t" style="left:0;top:5px;font-size:20px;color:#a6a6a6;letter-spacing:1px">Slide 1 of 14</div></div>
<!-- BOTTOM TOOLBAR -->
<svg style="left:42px;top:966px" width="32" height="31" viewBox="0 0 32 31"><path d="M11.5 16 V6 Q11.5 1 16 1 Q20.5 1 20.5 6 V16 Q20.5 21 16 21 Q11.5 21 11.5 16 Z" fill="none" stroke="#fff" stroke-width="1.7"/><path d="M7.5 14 Q7.5 25 16 25 Q24.5 25 24.5 14" fill="none" stroke="#fff" stroke-width="1.7"/><path d="M16 25 V29.5 M11 29.5 H21" stroke="#fff" stroke-width="1.7"/><path d="M3 30 L31 2" stroke="#e1245f" stroke-width="2.8" stroke-linecap="round"/></svg>
<svg style="left:92px;top:977px" width="12" height="8" viewBox="0 0 12 8"><path d="M1.5 6.5 L6 2 L10.5 6.5" fill="none" stroke="#fff" stroke-width="1.6"/></svg>
<svg style="left:159px;top:971px" width="32" height="20" viewBox="0 0 32 20"><rect x="1" y="1" width="19.5" height="18" rx="3.5" fill="none" stroke="#fff" stroke-width="1.7"/><path d="M21 7.5 L30 1.5 V18.5 L21 12.5" fill="none" stroke="#fff" stroke-width="1.7" stroke-linejoin="round"/></svg>
<svg style="left:216px;top:977px" width="12" height="8" viewBox="0 0 12 8"><path d="M1.5 6.5 L6 2 L10.5 6.5" fill="none" stroke="#fff" stroke-width="1.6"/></svg>
<div class="tb" style="left:-2px">Audio</div>
<div class="tb" style="left:115px">Video</div>

<svg style="left:432px;top:969px" width="25" height="25" viewBox="0 0 25 25"><circle cx="7.3" cy="5.4" r="3.3" fill="none" stroke="#fff" stroke-width="1.6"/><circle cx="16.7" cy="8.8" r="3.3" fill="none" stroke="#fff" stroke-width="1.6"/><path d="M11.5 12.8 Q9.5 11.4 7 11.4 Q1.8 11.6 1.8 17 V20.3 Q1.8 22.8 4.3 22.8 H10.5" fill="none" stroke="#fff" stroke-width="1.6"/><rect x="11.2" y="15.3" width="11.8" height="7.5" rx="3.75" fill="none" stroke="#fff" stroke-width="1.6"/></svg>
<div class="t" style="left:465px;top:972px;font-size:14px;color:#b5b5b5;letter-spacing:-0.3px">73</div>
<svg style="left:504px;top:977px" width="12" height="8" viewBox="0 0 12 8"><path d="M1.5 6.5 L6 2 L10.5 6.5" fill="none" stroke="#fff" stroke-width="1.6"/></svg>
<div class="tb" style="left:384px;letter-spacing:-0.1px">Participants</div>
<svg style="left:567px;top:967px" width="29" height="28" viewBox="0 0 29 28"><path d="M9 6 Q9 1.5 13.5 1.5 L23.5 1.5 Q28 1.5 28 6 V13 Q28 17 24 17" fill="none" stroke="#fff" stroke-width="1.6"/><path d="M1 11 Q1 6.5 5.5 6.5 H16.5 Q21 6.5 21 11 V17.5 Q21 22 16.5 22 H10 L6 26.5 V22 H5.5 Q1 22 1 17.5 Z" fill="none" stroke="#fff" stroke-width="1.6" stroke-linejoin="round"/><circle cx="6.5" cy="14.3" r="1.2" fill="#fff"/><circle cx="11" cy="14.3" r="1.2" fill="#fff"/><circle cx="15.5" cy="14.3" r="1.2" fill="#fff"/></svg>
<svg style="left:617px;top:977px" width="12" height="8" viewBox="0 0 12 8"><path d="M1.5 6.5 L6 2 L10.5 6.5" fill="none" stroke="#fff" stroke-width="1.6"/></svg>
<div class="tb" style="left:522px">Chat</div>
<svg style="left:673px;top:968px" width="32" height="27" viewBox="0 0 32 27"><path d="M16 25.5 L4 14 Q-1 8 4 3.5 Q9 -0.5 16 6 Q23 -0.5 28 3.5 Q33 8 28 14 Z" fill="none" stroke="#fff" stroke-width="1.6" stroke-linejoin="round"/></svg>
<div class="tb" style="left:628px">React</div>

<svg style="left:785px;top:969px" width="30" height="24" viewBox="0 0 30 24"><rect x="0" y="0" width="30" height="24" rx="3" fill="#22e684"/><path d="M15 19 V7 M9.5 12 L15 6 L20.5 12" fill="none" stroke="#000" stroke-width="3"/></svg>
<svg style="left:840px;top:977px" width="12" height="8" viewBox="0 0 12 8"><path d="M1.5 6.5 L6 2 L10.5 6.5" fill="none" stroke="#fff" stroke-width="1.6"/></svg>
<div class="tb" style="left:740px">Share</div>
<svg style="left:900px;top:968px" width="24" height="26" viewBox="0 0 24 26"><path d="M12 1 Q17 2.5 23 3 V11 Q23 20 12 25 Q1 20 1 11 V3 Q7 2.5 12 1 Z" fill="none" stroke="#fff" stroke-width="1.8"/><path d="M5 6 Q9 5.5 12 4.5 V13 H5 Z M12 13 H19.5 Q19 19 12 22 Z" fill="#fff"/></svg>
<div class="tb" style="left:852px;letter-spacing:-0.1px">Host tools</div>
<svg style="left:1005px;top:966px" width="30" height="29" viewBox="0 0 30 29"><defs><linearGradient id="aig" x1="0" y1="0" x2="1" y2="1"><stop offset="0" stop-color="#e9f4fb"/><stop offset="1" stop-color="#8ab7cf"/></linearGradient></defs><path d="M13 5 Q14.5 15 25 16.5 Q14.5 18 13 28.5 Q11.5 18 0.5 16.5 Q11.5 15 13 5 Z" fill="url(#aig)"/><path d="M24 0.5 Q24.6 3.6 28 4.3 Q24.6 5 24 8.2 Q23.4 5 20 4.3 Q23.4 3.6 24 0.5 Z" fill="#d8eaf4"/></svg>
<div class="tb" style="left:960px;letter-spacing:0.1px">AI Companion</div>
<svg style="left:1116px;top:966px" width="30" height="30" viewBox="0 0 30 30"><circle cx="15" cy="15" r="13.8" fill="none" stroke="#fff" stroke-width="1.8"/><circle cx="9" cy="15" r="1.7" fill="#fff"/><circle cx="15" cy="15" r="1.7" fill="#fff"/><circle cx="21" cy="15" r="1.7" fill="#fff"/></svg>
<div class="tb" style="left:1071px;letter-spacing:0.8px">More</div>
<svg style="left:1346px;top:968px" width="30" height="26" viewBox="0 0 30 26"><path d="M8 1 H22 L29 13 L22 25 H8 L1 13 Z" fill="none" stroke="#e1245f" stroke-width="1.9" stroke-linejoin="round"/><path d="M10.5 8.5 L19.5 17.5 M19.5 8.5 L10.5 17.5" stroke="#fff" stroke-width="3" stroke-linecap="round"/></svg>
<div class="tb" style="left:1301px">End</div>
<!-- PARTICIPANTS PANEL -->
<div class="a" style="left:1431px;top:58px;width:477px;height:963px;background:#fff;border-radius:9px;border-right:2px solid #c9c9cf"></div>
<div class="a" style="left:1436px;top:63px;width:467px;height:55px;background:#f0f2f5"></div>
<div class="t" style="left:1436px;top:83px;width:400px;text-align:center;font-size:15.8px;font-weight:700;color:#1f2230">Participants (73)</div>
<svg style="left:1838px;top:81px" width="19" height="18" viewBox="0 0 19 18"><path d="M7.5 2 H4 Q1.2 2 1.2 4.8 V14 Q1.2 16.8 4 16.8 H13.2 Q16 16.8 16 14 V10.5" fill="none" stroke="#6e7078" stroke-width="2.2"/><path d="M9 9 L17 1 M11 1.2 H17.5 V7.5" fill="none" stroke="#6e7078" stroke-width="2.2"/></svg>
<svg style="left:1874px;top:84px" width="13" height="13" viewBox="0 0 13 13"><path d="M0.7 0.7 L12.3 12.3 M12.3 0.7 L0.7 12.3" stroke="#6e7078" stroke-width="1.5"/></svg>
<div class="a" style="left:1459px;top:131px;width:423px;height:40px;border:1.5px solid #c3c4cb;border-radius:10px;background:#fff"></div>
<svg style="left:1473px;top:143px" width="16" height="16" viewBox="0 0 16 16"><circle cx="6.8" cy="6.8" r="5.6" fill="none" stroke="#6b6f7a" stroke-width="1.5"/><path d="M11 11 L15.2 15.2" stroke="#6b6f7a" stroke-width="1.6"/></svg>
<div class="t" style="left:1494px;top:143px;font-size:15.5px;color:#6b6f7a;letter-spacing:-0.1px">Find a participant</div>
<div class="a" style="left:1436px;top:172px;width:467px;height:776px;overflow:hidden">
<div class="av" style="left:27px;top:-11px;background:#27ae60;">H</div>
<div class="pn" style="left:75px;top:-1px">HP</div>
<svg style="left:416px;top:-3px" width="21" height="20" viewBox="0 0 21 20"><path d="M8 9 V3.5 Q8 0.8 10.5 0.8 Q13 0.8 13 3.5 V9.5" fill="none" stroke="#d63b35" stroke-width="1.3"/><path d="M5.5 9 Q5.5 15 10.5 15 Q15.5 15 15.5 9" fill="none" stroke="#d63b35" stroke-width="1.3"/><path d="M10.5 15 V18.5 M7.5 18.7 H13.5" stroke="#d63b35" stroke-width="1.4"/><path d="M0.8 19.2 L20 0.5" stroke="#d63b35" stroke-width="1.3"/></svg>
<div class="av" style="left:27px;top:40px;background:#34495e;">J</div>
<div class="pn" style="left:75px;top:50px">JAY</div>
<svg style="left:386px;top:48px" width="21" height="20" viewBox="0 0 21 20"><path d="M8 9 V3.5 Q8 0.8 10.5 0.8 Q13 0.8 13 3.5 V9.5" fill="none" stroke="#d63b35" stroke-width="1.3"/><path d="M5.5 9 Q5.5 15 10.5 15 Q15.5 15 15.5 9" fill="none" stroke="#d63b35" stroke-width="1.3"/><path d="M10.5 15 V18.5 M7.5 18.7 H13.5" stroke="#d63b35" stroke-width="1.4"/><path d="M0.8 19.2 L20 0.5" stroke="#d63b35" stroke-width="1.3"/></svg>
<svg style="left:416px;top:48px" width="21" height="20" viewBox="0 0 21 20"><path d="M13.5 4 H3 Q1 4 1 6 V14 Q1 16 3 16" fill="none" stroke="#d63b35" stroke-width="1.3"/><path d="M6 16 H13 Q14 16 14 15" fill="none" stroke="#d63b35" stroke-width="1.3"/><path d="M15 11 L20 15 V6 L16 8.5" fill="none" stroke="#d63b35" stroke-width="1.3" stroke-linejoin="round"/><path d="M1 19.5 L20.3 0.5" stroke="#d63b35" stroke-width="1.3"/></svg>
<div class="av" style="left:27px;top:91px;background:#f39c12;">KK</div>
<div class="pn" style="left:75px;top:101px">Karthik Kurup</div>
<svg style="left:386px;top:99px" width="21" height="20" viewBox="0 0 21 20"><path d="M8 9 V3.5 Q8 0.8 10.5 0.8 Q13 0.8 13 3.5 V9.5" fill="none" stroke="#d63b35" stroke-width="1.3"/><path d="M5.5 9 Q5.5 15 10.5 15 Q15.5 15 15.5 9" fill="none" stroke="#d63b35" stroke-width="1.3"/><path d="M10.5 15 V18.5 M7.5 18.7 H13.5" stroke="#d63b35" stroke-width="1.4"/><path d="M0.8 19.2 L20 0.5" stroke="#d63b35" stroke-width="1.3"/></svg>
<svg style="left:416px;top:99px" width="21" height="20" viewBox="0 0 21 20"><path d="M13.5 4 H3 Q1 4 1 6 V14 Q1 16 3 16" fill="none" stroke="#d63b35" stroke-width="1.3"/><path d="M6 16 H13 Q14 16 14 15" fill="none" stroke="#d63b35" stroke-width="1.3"/><path d="M15 11 L20 15 V6 L16 8.5" fill="none" stroke="#d63b35" stroke-width="1.3" stroke-linejoin="round"/><path d="M1 19.5 L20.3 0.5" stroke="#d63b35" stroke-width="1.3"/></svg>
<div class="av" style="left:27px;top:142px;background:#8e44ad;">K</div>
<div class="pn" style="left:75px;top:152px">Keerthana</div>
<svg style="left:386px;top:150px" width="21" height="20" viewBox="0 0 21 20"><path d="M8 9 V3.5 Q8 0.8 10.5 0.8 Q13 0.8 13 3.5 V9.5" fill="none" stroke="#d63b35" stroke-width="1.3"/><path d="M5.5 9 Q5.5 15 10.5 15 Q15.5 15 15.5 9" fill="none" stroke="#d63b35" stroke-width="1.3"/><path d="M10.5 15 V18.5 M7.5 18.7 H13.5" stroke="#d63b35" stroke-width="1.4"/><path d="M0.8 19.2 L20 0.5" stroke="#d63b35" stroke-width="1.3"/></svg>
<svg style="left:416px;top:150px" width="21" height="20" viewBox="0 0 21 20"><path d="M13.5 4 H3 Q1 4 1 6 V14 Q1 16 3 16" fill="none" stroke="#d63b35" stroke-width="1.3"/><path d="M6 16 H13 Q14 16 14 15" fill="none" stroke="#d63b35" stroke-width="1.3"/><path d="M15 11 L20 15 V6 L16 8.5" fill="none" stroke="#d63b35" stroke-width="1.3" stroke-linejoin="round"/><path d="M1 19.5 L20.3 0.5" stroke="#d63b35" stroke-width="1.3"/></svg>
<div class="av" style="left:27px;top:193px;background:#8e44ad;">KJ</div>
<div class="pn" style="left:75px;top:203px">Koradia Jeel</div>
<svg style="left:386px;top:201px" width="21" height="20" viewBox="0 0 21 20"><path d="M8 9 V3.5 Q8 0.8 10.5 0.8 Q13 0.8 13 3.5 V9.5" fill="none" stroke="#d63b35" stroke-width="1.3"/><path d="M5.5 9 Q5.5 15 10.5 15 Q15.5 15 15.5 9" fill="none" stroke="#d63b35" stroke-width="1.3"/><path d="M10.5 15 V18.5 M7.5 18.7 H13.5" stroke="#d63b35" stroke-width="1.4"/><path d="M0.8 19.2 L20 0.5" stroke="#d63b35" stroke-width="1.3"/></svg>
<svg style="left:416px;top:201px" width="21" height="20" viewBox="0 0 21 20"><path d="M13.5 4 H3 Q1 4 1 6 V14 Q1 16 3 16" fill="none" stroke="#d63b35" stroke-width="1.3"/><path d="M6 16 H13 Q14 16 14 15" fill="none" stroke="#d63b35" stroke-width="1.3"/><path d="M15 11 L20 15 V6 L16 8.5" fill="none" stroke="#d63b35" stroke-width="1.3" stroke-linejoin="round"/><path d="M1 19.5 L20.3 0.5" stroke="#d63b35" stroke-width="1.3"/></svg>
<div class="av" style="left:27px;top:244px;background:#e67e22;font-weight:400;font-size:22px;">K</div>
<div class="pn" style="left:75px;top:254px">Kripa Tarawadekar</div>
<svg style="left:386px;top:252px" width="21" height="20" viewBox="0 0 21 20"><path d="M8 9 V3.5 Q8 0.8 10.5 0.8 Q13 0.8 13 3.5 V9.5" fill="none" stroke="#d63b35" stroke-width="1.3"/><path d="M5.5 9 Q5.5 15 10.5 15 Q15.5 15 15.5 9" fill="none" stroke="#d63b35" stroke-width="1.3"/><path d="M10.5 15 V18.5 M7.5 18.7 H13.5" stroke="#d63b35" stroke-width="1.4"/><path d="M0.8 19.2 L20 0.5" stroke="#d63b35" stroke-width="1.3"/></svg>
<svg style="left:416px;top:252px" width="21" height="20" viewBox="0 0 21 20"><path d="M13.5 4 H3 Q1 4 1 6 V14 Q1 16 3 16" fill="none" stroke="#d63b35" stroke-width="1.3"/><path d="M6 16 H13 Q14 16 14 15" fill="none" stroke="#d63b35" stroke-width="1.3"/><path d="M15 11 L20 15 V6 L16 8.5" fill="none" stroke="#d63b35" stroke-width="1.3" stroke-linejoin="round"/><path d="M1 19.5 L20.3 0.5" stroke="#d63b35" stroke-width="1.3"/></svg>
<div class="av" style="left:27px;top:295px;background:#8e44ad;">MS</div>
<div class="pn" style="left:75px;top:305px">Mahi shah</div>
<svg style="left:386px;top:303px" width="21" height="20" viewBox="0 0 21 20"><path d="M8 9 V3.5 Q8 0.8 10.5 0.8 Q13 0.8 13 3.5 V9.5" fill="none" stroke="#d63b35" stroke-width="1.3"/><path d="M5.5 9 Q5.5 15 10.5 15 Q15.5 15 15.5 9" fill="none" stroke="#d63b35" stroke-width="1.3"/><path d="M10.5 15 V18.5 M7.5 18.7 H13.5" stroke="#d63b35" stroke-width="1.4"/><path d="M0.8 19.2 L20 0.5" stroke="#d63b35" stroke-width="1.3"/></svg>
<svg style="left:416px;top:303px" width="21" height="20" viewBox="0 0 21 20"><path d="M13.5 4 H3 Q1 4 1 6 V14 Q1 16 3 16" fill="none" stroke="#d63b35" stroke-width="1.3"/><path d="M6 16 H13 Q14 16 14 15" fill="none" stroke="#d63b35" stroke-width="1.3"/><path d="M15 11 L20 15 V6 L16 8.5" fill="none" stroke="#d63b35" stroke-width="1.3" stroke-linejoin="round"/><path d="M1 19.5 L20.3 0.5" stroke="#d63b35" stroke-width="1.3"/></svg>
<div class="av" style="left:27px;top:346px;background:#2980b9;">M</div>
<div class="pn" style="left:75px;top:356px">Manali</div>
<svg style="left:386px;top:354px" width="21" height="20" viewBox="0 0 21 20"><path d="M8 9 V3.5 Q8 0.8 10.5 0.8 Q13 0.8 13 3.5 V9.5" fill="none" stroke="#d63b35" stroke-width="1.3"/><path d="M5.5 9 Q5.5 15 10.5 15 Q15.5 15 15.5 9" fill="none" stroke="#d63b35" stroke-width="1.3"/><path d="M10.5 15 V18.5 M7.5 18.7 H13.5" stroke="#d63b35" stroke-width="1.4"/><path d="M0.8 19.2 L20 0.5" stroke="#d63b35" stroke-width="1.3"/></svg>
<svg style="left:416px;top:354px" width="21" height="20" viewBox="0 0 21 20"><path d="M13.5 4 H3 Q1 4 1 6 V14 Q1 16 3 16" fill="none" stroke="#d63b35" stroke-width="1.3"/><path d="M6 16 H13 Q14 16 14 15" fill="none" stroke="#d63b35" stroke-width="1.3"/><path d="M15 11 L20 15 V6 L16 8.5" fill="none" stroke="#d63b35" stroke-width="1.3" stroke-linejoin="round"/><path d="M1 19.5 L20.3 0.5" stroke="#d63b35" stroke-width="1.3"/></svg>
<div class="av" style="left:27px;top:397px;background:#8e44ad;">N</div>
<div class="pn" style="left:75px;top:407px">Naman</div>
<svg style="left:386px;top:405px" width="21" height="20" viewBox="0 0 21 20"><path d="M8 9 V3.5 Q8 0.8 10.5 0.8 Q13 0.8 13 3.5 V9.5" fill="none" stroke="#d63b35" stroke-width="1.3"/><path d="M5.5 9 Q5.5 15 10.5 15 Q15.5 15 15.5 9" fill="none" stroke="#d63b35" stroke-width="1.3"/><path d="M10.5 15 V18.5 M7.5 18.7 H13.5" stroke="#d63b35" stroke-width="1.4"/><path d="M0.8 19.2 L20 0.5" stroke="#d63b35" stroke-width="1.3"/></svg>
<svg style="left:416px;top:405px" width="21" height="20" viewBox="0 0 21 20"><path d="M13.5 4 H3 Q1 4 1 6 V14 Q1 16 3 16" fill="none" stroke="#d63b35" stroke-width="1.3"/><path d="M6 16 H13 Q14 16 14 15" fill="none" stroke="#d63b35" stroke-width="1.3"/><path d="M15 11 L20 15 V6 L16 8.5" fill="none" stroke="#d63b35" stroke-width="1.3" stroke-linejoin="round"/><path d="M1 19.5 L20.3 0.5" stroke="#d63b35" stroke-width="1.3"/></svg>
<div class="av" style="left:27px;top:448px;background:#27ae60;">NH</div>
<div class="pn" style="left:75px;top:458px">Nidhi Haridas</div>
<svg style="left:386px;top:456px" width="21" height="20" viewBox="0 0 21 20"><path d="M8 9 V3.5 Q8 0.8 10.5 0.8 Q13 0.8 13 3.5 V9.5" fill="none" stroke="#d63b35" stroke-width="1.3"/><path d="M5.5 9 Q5.5 15 10.5 15 Q15.5 15 15.5 9" fill="none" stroke="#d63b35" stroke-width="1.3"/><path d="M10.5 15 V18.5 M7.5 18.7 H13.5" stroke="#d63b35" stroke-width="1.4"/><path d="M0.8 19.2 L20 0.5" stroke="#d63b35" stroke-width="1.3"/></svg>
<svg style="left:416px;top:456px" width="21" height="20" viewBox="0 0 21 20"><path d="M13.5 4 H3 Q1 4 1 6 V14 Q1 16 3 16" fill="none" stroke="#d63b35" stroke-width="1.3"/><path d="M6 16 H13 Q14 16 14 15" fill="none" stroke="#d63b35" stroke-width="1.3"/><path d="M15 11 L20 15 V6 L16 8.5" fill="none" stroke="#d63b35" stroke-width="1.3" stroke-linejoin="round"/><path d="M1 19.5 L20.3 0.5" stroke="#d63b35" stroke-width="1.3"/></svg>
<div class="av" style="left:27px;top:499px;background:#c0392b;">NF</div>
<div class="pn" style="left:75px;top:509px">Nooryen Faras</div>
<svg style="left:386px;top:507px" width="21" height="20" viewBox="0 0 21 20"><path d="M8 9 V3.5 Q8 0.8 10.5 0.8 Q13 0.8 13 3.5 V9.5" fill="none" stroke="#d63b35" stroke-width="1.3"/><path d="M5.5 9 Q5.5 15 10.5 15 Q15.5 15 15.5 9" fill="none" stroke="#d63b35" stroke-width="1.3"/><path d="M10.5 15 V18.5 M7.5 18.7 H13.5" stroke="#d63b35" stroke-width="1.4"/><path d="M0.8 19.2 L20 0.5" stroke="#d63b35" stroke-width="1.3"/></svg>
<svg style="left:416px;top:507px" width="21" height="20" viewBox="0 0 21 20"><path d="M13.5 4 H3 Q1 4 1 6 V14 Q1 16 3 16" fill="none" stroke="#d63b35" stroke-width="1.3"/><path d="M6 16 H13 Q14 16 14 15" fill="none" stroke="#d63b35" stroke-width="1.3"/><path d="M15 11 L20 15 V6 L16 8.5" fill="none" stroke="#d63b35" stroke-width="1.3" stroke-linejoin="round"/><path d="M1 19.5 L20.3 0.5" stroke="#d63b35" stroke-width="1.3"/></svg>
<div class="av" style="left:27px;top:550px;background:#27ae60;">PT</div>
<div class="pn" style="left:75px;top:560px">Palak Thakur</div>
<svg style="left:386px;top:558px" width="21" height="20" viewBox="0 0 21 20"><path d="M8 9 V3.5 Q8 0.8 10.5 0.8 Q13 0.8 13 3.5 V9.5" fill="none" stroke="#d63b35" stroke-width="1.3"/><path d="M5.5 9 Q5.5 15 10.5 15 Q15.5 15 15.5 9" fill="none" stroke="#d63b35" stroke-width="1.3"/><path d="M10.5 15 V18.5 M7.5 18.7 H13.5" stroke="#d63b35" stroke-width="1.4"/><path d="M0.8 19.2 L20 0.5" stroke="#d63b35" stroke-width="1.3"/></svg>
<svg style="left:416px;top:558px" width="21" height="20" viewBox="0 0 21 20"><path d="M13.5 4 H3 Q1 4 1 6 V14 Q1 16 3 16" fill="none" stroke="#d63b35" stroke-width="1.3"/><path d="M6 16 H13 Q14 16 14 15" fill="none" stroke="#d63b35" stroke-width="1.3"/><path d="M15 11 L20 15 V6 L16 8.5" fill="none" stroke="#d63b35" stroke-width="1.3" stroke-linejoin="round"/><path d="M1 19.5 L20.3 0.5" stroke="#d63b35" stroke-width="1.3"/></svg>
<div class="av" style="left:27px;top:601px;background:#c0392b;">P</div>
<div class="pn" style="left:75px;top:611px">Parth</div>
<svg style="left:386px;top:609px" width="21" height="20" viewBox="0 0 21 20"><path d="M8 9 V3.5 Q8 0.8 10.5 0.8 Q13 0.8 13 3.5 V9.5" fill="none" stroke="#d63b35" stroke-width="1.3"/><path d="M5.5 9 Q5.5 15 10.5 15 Q15.5 15 15.5 9" fill="none" stroke="#d63b35" stroke-width="1.3"/><path d="M10.5 15 V18.5 M7.5 18.7 H13.5" stroke="#d63b35" stroke-width="1.4"/><path d="M0.8 19.2 L20 0.5" stroke="#d63b35" stroke-width="1.3"/></svg>
<svg style="left:416px;top:609px" width="21" height="20" viewBox="0 0 21 20"><path d="M13.5 4 H3 Q1 4 1 6 V14 Q1 16 3 16" fill="none" stroke="#d63b35" stroke-width="1.3"/><path d="M6 16 H13 Q14 16 14 15" fill="none" stroke="#d63b35" stroke-width="1.3"/><path d="M15 11 L20 15 V6 L16 8.5" fill="none" stroke="#d63b35" stroke-width="1.3" stroke-linejoin="round"/><path d="M1 19.5 L20.3 0.5" stroke="#d63b35" stroke-width="1.3"/></svg>
<div class="av" style="left:27px;top:652px;background:#c0392b;">P</div>
<div class="pn" style="left:75px;top:662px">parth</div>
<svg style="left:386px;top:660px" width="21" height="20" viewBox="0 0 21 20"><path d="M8 9 V3.5 Q8 0.8 10.5 0.8 Q13 0.8 13 3.5 V9.5" fill="none" stroke="#d63b35" stroke-width="1.3"/><path d="M5.5 9 Q5.5 15 10.5 15 Q15.5 15 15.5 9" fill="none" stroke="#d63b35" stroke-width="1.3"/><path d="M10.5 15 V18.5 M7.5 18.7 H13.5" stroke="#d63b35" stroke-width="1.4"/><path d="M0.8 19.2 L20 0.5" stroke="#d63b35" stroke-width="1.3"/></svg>
<svg style="left:416px;top:660px" width="21" height="20" viewBox="0 0 21 20"><path d="M13.5 4 H3 Q1 4 1 6 V14 Q1 16 3 16" fill="none" stroke="#d63b35" stroke-width="1.3"/><path d="M6 16 H13 Q14 16 14 15" fill="none" stroke="#d63b35" stroke-width="1.3"/><path d="M15 11 L20 15 V6 L16 8.5" fill="none" stroke="#d63b35" stroke-width="1.3" stroke-linejoin="round"/><path d="M1 19.5 L20.3 0.5" stroke="#d63b35" stroke-width="1.3"/></svg>
<div class="av" style="left:27px;top:703px;background:#8e44ad;">P</div>
<div class="pn" style="left:75px;top:713px">Pkunaka</div>
<svg style="left:386px;top:711px" width="21" height="20" viewBox="0 0 21 20"><path d="M8 9 V3.5 Q8 0.8 10.5 0.8 Q13 0.8 13 3.5 V9.5" fill="none" stroke="#d63b35" stroke-width="1.3"/><path d="M5.5 9 Q5.5 15 10.5 15 Q15.5 15 15.5 9" fill="none" stroke="#d63b35" stroke-width="1.3"/><path d="M10.5 15 V18.5 M7.5 18.7 H13.5" stroke="#d63b35" stroke-width="1.4"/><path d="M0.8 19.2 L20 0.5" stroke="#d63b35" stroke-width="1.3"/></svg>
<svg style="left:416px;top:711px" width="21" height="20" viewBox="0 0 21 20"><path d="M13.5 4 H3 Q1 4 1 6 V14 Q1 16 3 16" fill="none" stroke="#d63b35" stroke-width="1.3"/><path d="M6 16 H13 Q14 16 14 15" fill="none" stroke="#d63b35" stroke-width="1.3"/><path d="M15 11 L20 15 V6 L16 8.5" fill="none" stroke="#d63b35" stroke-width="1.3" stroke-linejoin="round"/><path d="M1 19.5 L20.3 0.5" stroke="#d63b35" stroke-width="1.3"/></svg>
<div class="av" style="left:27px;top:754px;background:#16a085;">PJ</div>
<div class="pn" style="left:75px;top:764px">Pooja Jagdale</div>
<svg style="left:386px;top:762px" width="21" height="20" viewBox="0 0 21 20"><path d="M8 9 V3.5 Q8 0.8 10.5 0.8 Q13 0.8 13 3.5 V9.5" fill="none" stroke="#d63b35" stroke-width="1.3"/><path d="M5.5 9 Q5.5 15 10.5 15 Q15.5 15 15.5 9" fill="none" stroke="#d63b35" stroke-width="1.3"/><path d="M10.5 15 V18.5 M7.5 18.7 H13.5" stroke="#d63b35" stroke-width="1.4"/><path d="M0.8 19.2 L20 0.5" stroke="#d63b35" stroke-width="1.3"/></svg>
<svg style="left:416px;top:762px" width="21" height="20" viewBox="0 0 21 20"><path d="M13.5 4 H3 Q1 4 1 6 V14 Q1 16 3 16" fill="none" stroke="#d63b35" stroke-width="1.3"/><path d="M6 16 H13 Q14 16 14 15" fill="none" stroke="#d63b35" stroke-width="1.3"/><path d="M15 11 L20 15 V6 L16 8.5" fill="none" stroke="#d63b35" stroke-width="1.3" stroke-linejoin="round"/><path d="M1 19.5 L20.3 0.5" stroke="#d63b35" stroke-width="1.3"/></svg>
</div>
<div class="a" style="left:1890px;top:174px;width:10px;height:773px;border-radius:5px;background:#f0f0f5"></div>
<div class="a" style="left:1890px;top:485px;width:10px;height:174px;border-radius:5px;background:#a9a9b1"></div>
<div class="a" style="left:1507px;top:969px;width:67px;height:29px;border:1px solid #8e8e95;border-radius:8px;background:#fff"></div>
<div class="t" style="left:1507px;top:976px;width:67px;text-align:center;font-size:15.3px;color:#222230">Invite</div>
<div class="a" style="left:1645px;top:969px;width:85px;height:29px;border-radius:8px;background:#0b6cf0"></div>
<div class="t" style="left:1645px;top:976px;width:85px;text-align:center;font-size:15.5px;color:#fff">Mute all</div>
<div class="a" style="left:1801px;top:969px;width:29px;height:29px;border:1px solid #8e8e95;border-radius:8px;background:#fff"></div>
<svg style="left:1808px;top:981px" width="15" height="4" viewBox="0 0 15 4"><circle cx="2" cy="2" r="1.5" fill="#222230"/><circle cx="7.5" cy="2" r="1.5" fill="#222230"/><circle cx="13" cy="2" r="1.5" fill="#222230"/></svg>
</body></html>
